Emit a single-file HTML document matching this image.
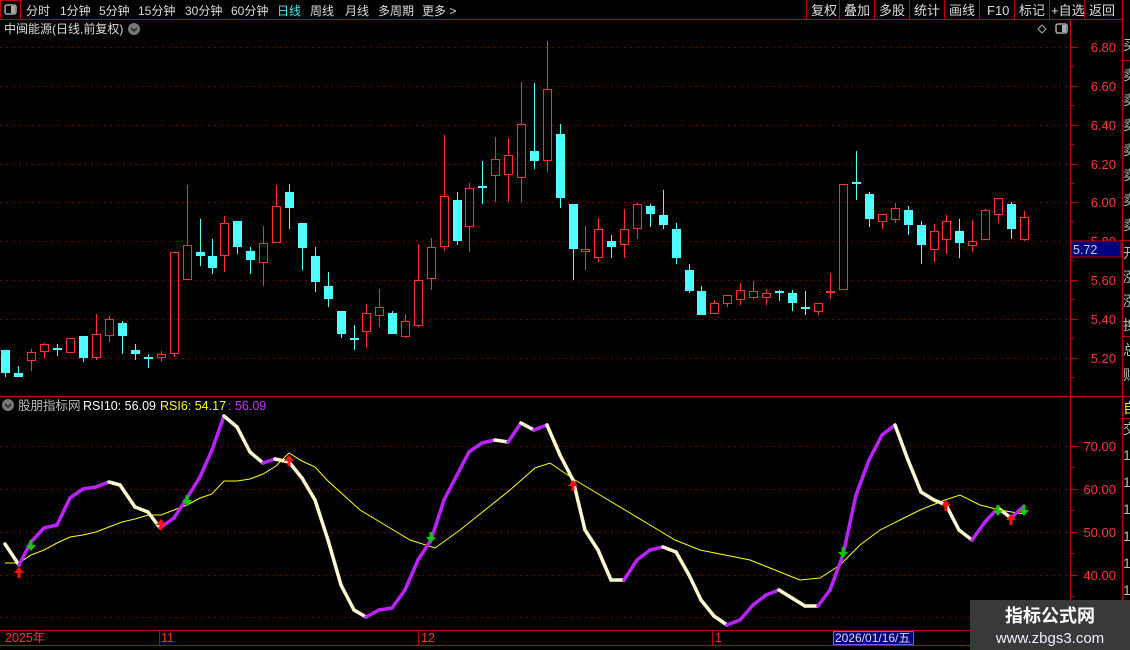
<!DOCTYPE html>
<html><head><meta charset="utf-8"><style>
html,body{margin:0;padding:0;background:#000;width:1130px;height:650px;overflow:hidden}
body{font-family:"Liberation Sans","Noto Sans CJK SC",sans-serif}
svg{display:block}
</style></head><body>
<svg id="s" width="1130" height="650" xmlns="http://www.w3.org/2000/svg" font-family="Liberation Sans, Noto Sans CJK SC, sans-serif">
<rect width="1130" height="650" fill="#000"/>
<line x1="0" y1="19.5" x2="1122" y2="19.5" stroke="#c00000"/>
<rect x="0.5" y="0.5" width="20" height="19" fill="none" stroke="#c00000"/>
<rect x="5" y="5" width="11" height="9" rx="2" fill="none" stroke="#aaa" stroke-width="1.5"/>
<rect x="11" y="6" width="4" height="7" fill="#aaa"/>
<g font-size="12" fill="#dcdcdc">
<text x="26" y="15">分时</text><text x="60" y="15">1分钟</text><text x="99" y="15">5分钟</text><text x="138" y="15">15分钟</text><text x="185" y="15">30分钟</text><text x="231" y="15">60分钟</text>
<text x="277" y="15" fill="#3ef0f0">日线</text><text x="310" y="15">周线</text><text x="345" y="15">月线</text><text x="378" y="15">多周期</text><text x="422" y="15">更多 &gt;</text>
</g>
<g font-size="13" fill="#dcdcdc">
<text x="811" y="15">复权</text><text x="844" y="15">叠加</text><text x="879" y="15">多股</text><text x="914" y="15">统计</text><text x="949" y="15">画线</text><text x="987" y="15">F10</text><text x="1019" y="15">标记</text><text x="1051" y="15">+自选</text><text x="1089" y="15">返回</text>
</g>
<g stroke="#c00000"><line x1="806.5" y1="0" x2="806.5" y2="19"/><line x1="839.5" y1="0" x2="839.5" y2="19"/><line x1="874.5" y1="0" x2="874.5" y2="19"/><line x1="909.5" y1="0" x2="909.5" y2="19"/><line x1="944.5" y1="0" x2="944.5" y2="19"/><line x1="979.5" y1="0" x2="979.5" y2="19"/><line x1="1014.5" y1="0" x2="1014.5" y2="19"/><line x1="1049.5" y1="0" x2="1049.5" y2="19"/><line x1="1084.5" y1="0" x2="1084.5" y2="19"/><line x1="1122.5" y1="0" x2="1122.5" y2="650"/><line x1="1070.5" y1="20" x2="1070.5" y2="630"/></g>
<text x="4" y="33" font-size="12" fill="#dcdcdc">中闽能源(日线,前复权)</text>
<circle cx="134" cy="29" r="6" fill="#777"/><path d="M131 28l3 3 3-3" stroke="#222" stroke-width="1.5" fill="none"/>
<path d="M1042 25l4 4-4 4-4-4z" fill="none" stroke="#aaa"/>
<rect x="1056" y="24" width="11" height="9" rx="2" fill="none" stroke="#aaa" stroke-width="1.5"/><rect x="1062" y="25" width="4" height="7" fill="#aaa"/>
<line x1="0" y1="396.5" x2="1122" y2="396.5" stroke="#c00000" stroke-width="1.5"/>
<line x1="0" y1="630.5" x2="1122" y2="630.5" stroke="#c00000"/>
<line x1="0" y1="645.5" x2="1122" y2="645.5" stroke="#c00000"/>
<g id="g"></g>
<circle cx="8" cy="405" r="6" fill="#777"/><path d="M5 404l3 3 3-3" stroke="#222" stroke-width="1.5" fill="none"/>
<text x="18" y="410" font-size="12.5" fill="#bbb">股朋指标网</text>
<text x="83" y="410" font-size="12.5" fill="#fff">RSI10: 56.09</text>
<text x="160" y="410" font-size="12.5" fill="#ffff00">RSI6: 54.17</text>
<text x="228" y="410" font-size="12.5" fill="#cc33ff">: 56.09</text>
<g font-size="12.5" fill="#ff3333"><text x="5" y="642">2025年</text><text x="161" y="642">11</text><text x="421" y="642">12</text><text x="715" y="642">1</text></g>
<g stroke="#c00000"><line x1="159.5" y1="630" x2="159.5" y2="645"/><line x1="418.5" y1="630" x2="418.5" y2="645"/><line x1="712.5" y1="630" x2="712.5" y2="645"/></g>
<rect x="833.5" y="631.5" width="80" height="13" fill="#000080" stroke="#6060ff"/>
<text x="835" y="642" font-size="12" fill="#ddd">2026/01/16/五</text>
<rect x="1071" y="241" width="50" height="16" fill="#000080" stroke="#c00000"/>
<text x="1073" y="254" font-size="12.5" fill="#ccd">5.72</text>
<g stroke="#c00000"><line x1="1122" y1="60.5" x2="1130" y2="60.5"/><line x1="1122" y1="240.5" x2="1130" y2="240.5"/><line x1="1122" y1="336.5" x2="1130" y2="336.5"/><line x1="1122" y1="396.5" x2="1130" y2="396.5"/><line x1="1122" y1="418.5" x2="1130" y2="418.5"/></g>
<g font-size="14" fill="#bbb"><text x="1123" y="50">买</text><text x="1123" y="80">卖</text><text x="1123" y="105">卖</text><text x="1123" y="130">卖</text><text x="1123" y="155">卖</text><text x="1123" y="180">卖</text><text x="1123" y="205">卖</text><text x="1123" y="230">卖</text><text x="1123" y="258">开</text><text x="1123" y="282">涨</text><text x="1123" y="306">涨</text><text x="1123" y="330">换</text><text x="1123" y="355">总</text><text x="1123" y="380">财</text><text x="1123" y="434">交</text><text x="1123" y="460">1</text><text x="1123" y="487">1</text><text x="1123" y="514">1</text><text x="1123" y="541">1</text><text x="1123" y="568">1</text><text x="1123" y="595">1</text></g>
<text x="1123" y="413" font-size="14" fill="#ee0">自</text>
<rect x="970" y="600" width="160" height="50" fill="#3a3838"/>
<text x="1050" y="622" font-size="18" font-weight="bold" fill="#fff" text-anchor="middle">指标公式网</text>
<text x="1050" y="643" font-size="15" fill="#eef" text-anchor="middle">www.zbgs3.com</text>
</svg>
<script>
var g=document.getElementById('g'),h='';
var py=[47,86,125,164,202,241,280,319,358],pl=['6.80','6.60','6.40','6.20','6.00','5.80','5.60','5.40','5.20'];
py.forEach(function(y,i){h+='<line x1="0" y1="'+y+'.5" x2="1068" y2="'+y+'.5" stroke="#a00000" stroke-dasharray="1.3 5.2"/>';
h+='<line x1="1070" y1="'+y+'.5" x2="1078" y2="'+y+'.5" stroke="#c00000"/>';
if(i!=5)h+='<text x="1116" y="'+(y+5)+'" font-size="13" fill="#ff3333" text-anchor="end">'+pl[i]+'</text>';
h+='<line x1="1070" y1="'+(y+19)+'.5" x2="1074" y2="'+(y+19)+'.5" stroke="#c00000"/>';});
h+='<text x="1116" y="246" font-size="13" fill="#ff3333" text-anchor="end">5.80</text>';
var iy=[446,489,532,575],il=['70.00','60.00','50.00','40.00'];
iy.forEach(function(y,i){h+='<line x1="0" y1="'+y+'.5" x2="1068" y2="'+y+'.5" stroke="#a00000" stroke-dasharray="1.3 5.2"/><line x1="1070" y1="'+y+'.5" x2="1078" y2="'+y+'.5" stroke="#c00000"/><text x="1116" y="'+(y+5)+'" font-size="13" fill="#ff3333" text-anchor="end">'+il[i]+'</text><line x1="1070" y1="'+(y+21)+'.5" x2="1074" y2="'+(y+21)+'.5" stroke="#c00000"/>';});
h+='<line x1="0" y1="617.5" x2="1068" y2="617.5" stroke="#a00000" stroke-dasharray="1.3 5.2"/>';
var C=[[5,350,373,350,377,0],[18,373,377,366,377,0],[31,352,361,349,371,1],[44,344,352,343,358,1],[57,348,350,344,356,0],[70,338,353,338,353,1],[83,336,358,336,362,0],[96,334,358,314,360,1],[109,319,336,316,342,1],[122,323,336,321,354,0],[135,350,354,344,360,0],[148,357,359,354,368,0],[161,354,358,351,362,1],[174,252,354,252,357,1],[187,245,280,185,280,1],[200,252,256,219,266,0],[212,256,268,239,274,0],[224,223,256,216,272,1],[237,221,247,221,254,0],[250,251,260,247,274,0],[263,243,263,226,286,1],[276,206,243,185,243,1],[289,192,208,184,229,0],[302,223,248,223,270,0],[315,256,282,247,292,0],[328,286,299,272,307,0],[341,311,334,311,338,0],[354,338,340,325,350,0],
[366,313,332,304,348,1],[379,307,316,289,327,1],[392,313,334,311,334,0],[405,321,337,314,338,1],[418,280,326,244,327,1],[431,247,279,238,290,1],[444,196,247,135,251,1],[457,200,241,192,245,0],[469,188,227,183,252,1],[482,186,188,161,204,0],[495,159,176,137,202,1],[508,155,175,138,202,1],[521,124,178,82,202,1],[534,151,161,83,169,0],[547,89,161,41,172,1],[560,134,198,124,208,0],[573,204,249,204,280,0],[585,249,252,226,270,1],[598,229,258,218,262,1],[611,241,247,235,258,0],[624,229,245,209,258,1],[637,204,229,203,239,1],[650,206,214,204,227,0],[663,215,225,190,229,0],[676,229,258,223,264,0],[689,270,291,264,293,0],[701,291,315,286,315,0],
[714,303,314,300,314,1],[727,295,304,295,307,1],[740,290,300,283,305,1],[753,291,298,281,299,1],[766,293,298,289,305,1],[779,291,293,290,301,0],[792,293,303,290,311,0],[805,307,309,291,315,0],[818,303,312,303,315,1],[830,291,293,273,299,1],[843,184,290,184,290,1],[856,182,184,151,200,0],[869,194,219,192,227,0],[882,214,222,214,229,1],[895,208,220,203,223,1],[908,210,225,206,235,0],[921,225,245,221,264,0],[934,231,250,224,262,1],[946,221,240,215,254,1],[959,231,243,219,258,0],[972,241,246,220,252,1],[985,210,240,209,240,1],[998,198,215,198,223,1],[1011,204,229,202,239,0],[1024,217,240,211,241,1]];
C.forEach(function(c){var x=c[0],col=c[5]?'#ff3030':'#50ffff';
if(c[5]){h+='<line x1="'+(x+.5)+'" y1="'+c[3]+'" x2="'+(x+.5)+'" y2="'+c[1]+'" stroke="'+col+'"/><line x1="'+(x+.5)+'" y1="'+c[2]+'" x2="'+(x+.5)+'" y2="'+c[4]+'" stroke="'+col+'"/>';
h+='<rect x="'+(x-3.5)+'" y="'+(c[1]+.5)+'" width="8" height="'+Math.max(1,c[2]-c[1]-1)+'" fill="none" stroke="'+col+'"/>';}
else{h+='<line x1="'+(x+.5)+'" y1="'+c[3]+'" x2="'+(x+.5)+'" y2="'+c[4]+'" stroke="'+col+'"/>';h+='<rect x="'+(x-4)+'" y="'+c[1]+'" width="9" height="'+Math.max(2,c[2]-c[1])+'" fill="'+col+'"/>';}});
var T=[[5,544],[19,565],[31,542],[44,528],[57,525],[70,498],[83,489],[96,487],[109,482],[120,485],[135,507],[148,512],[160,528],[174,518],[187,498],[200,477],[212,450],[224,416],[237,427],[250,452],[263,463],[275,459],[289,462],[302,478],[315,500],[328,540],[341,585],[354,610],[366,617],[379,610],[392,608],[405,590],[418,560],[431,540],[444,500],[457,475],[469,452],[482,443],[495,440],[508,442],[521,423],[534,430],[547,425],[560,455],[573,480],[585,530],[598,550],[611,580],[624,580],[637,560],[650,550],[663,547],[676,552],[689,575],[701,600],[714,616],[727,625],[740,620],[753,605],[766,595],[779,590],[792,598],[805,606],[818,606],[830,590],[843,555],[856,495],[869,460],[882,435],[895,425],[908,460],[921,492],[934,500],[946,505],[959,530],[972,540],[985,522],[998,508],[1011,518],[1024,506]];
var Y=[[5,563],[19,563],[31,555],[44,550],[57,543],[70,537],[83,535],[96,532],[109,527],[122,522],[135,519],[148,515],[161,515],[174,510],[187,505],[200,498],[212,494],[224,481],[237,481],[250,479],[263,474],[276,466],[289,453],[302,461],[315,467],[328,481],[360,510],[385,525],[410,540],[435,548],[460,530],[485,510],[510,490],[535,468],[550,463],[575,480],[600,495],[625,510],[650,525],[675,540],[700,550],[725,555],[750,560],[775,570],[800,580],[820,578],[840,565],[860,545],[880,530],[900,520],[920,510],[945,500],[960,495],[980,505],[1000,510],[1024,514]];
h+='<polyline points="'+Y.map(function(p){return p.join(',')}).join(' ')+'" fill="none" stroke="#ffff00" stroke-width="1"/>';
h+='<polyline points="'+T.map(function(p){return p.join(',')}).join(' ')+'" fill="none" stroke="#fff" stroke-width="1"/>';
for(var i=1;i<T.length;i++){var a=T[i-1],b=T[i];h+='<line x1="'+a[0]+'" y1="'+a[1]+'" x2="'+b[0]+'" y2="'+b[1]+'" stroke="'+(b[1]<a[1]?'#bb22ff':'#fffacd')+'" stroke-width="3.5" stroke-linecap="round"/>';}
function dn(x,y){return '<path d="M'+(x-1.5)+' '+(y-8)+'h3v5h3.5l-5 6-5-6h3.5z" fill="#00cc00"/>';}
function up(x,y){return '<path d="M'+(x-1.5)+' '+(y+8)+'h3v-5h3.5l-5-6-5 6h3.5z" fill="#ff1010"/>';}
[[31,548],[187,503],[431,540],[843,555],[998,513],[1024,513]].forEach(function(p){h+=dn(p[0],p[1]);});
[[19,570],[161,522],[289,458],[573,483],[946,503],[1011,517]].forEach(function(p){h+=up(p[0],p[1]);});
g.innerHTML=h;
</script>
</body></html>
